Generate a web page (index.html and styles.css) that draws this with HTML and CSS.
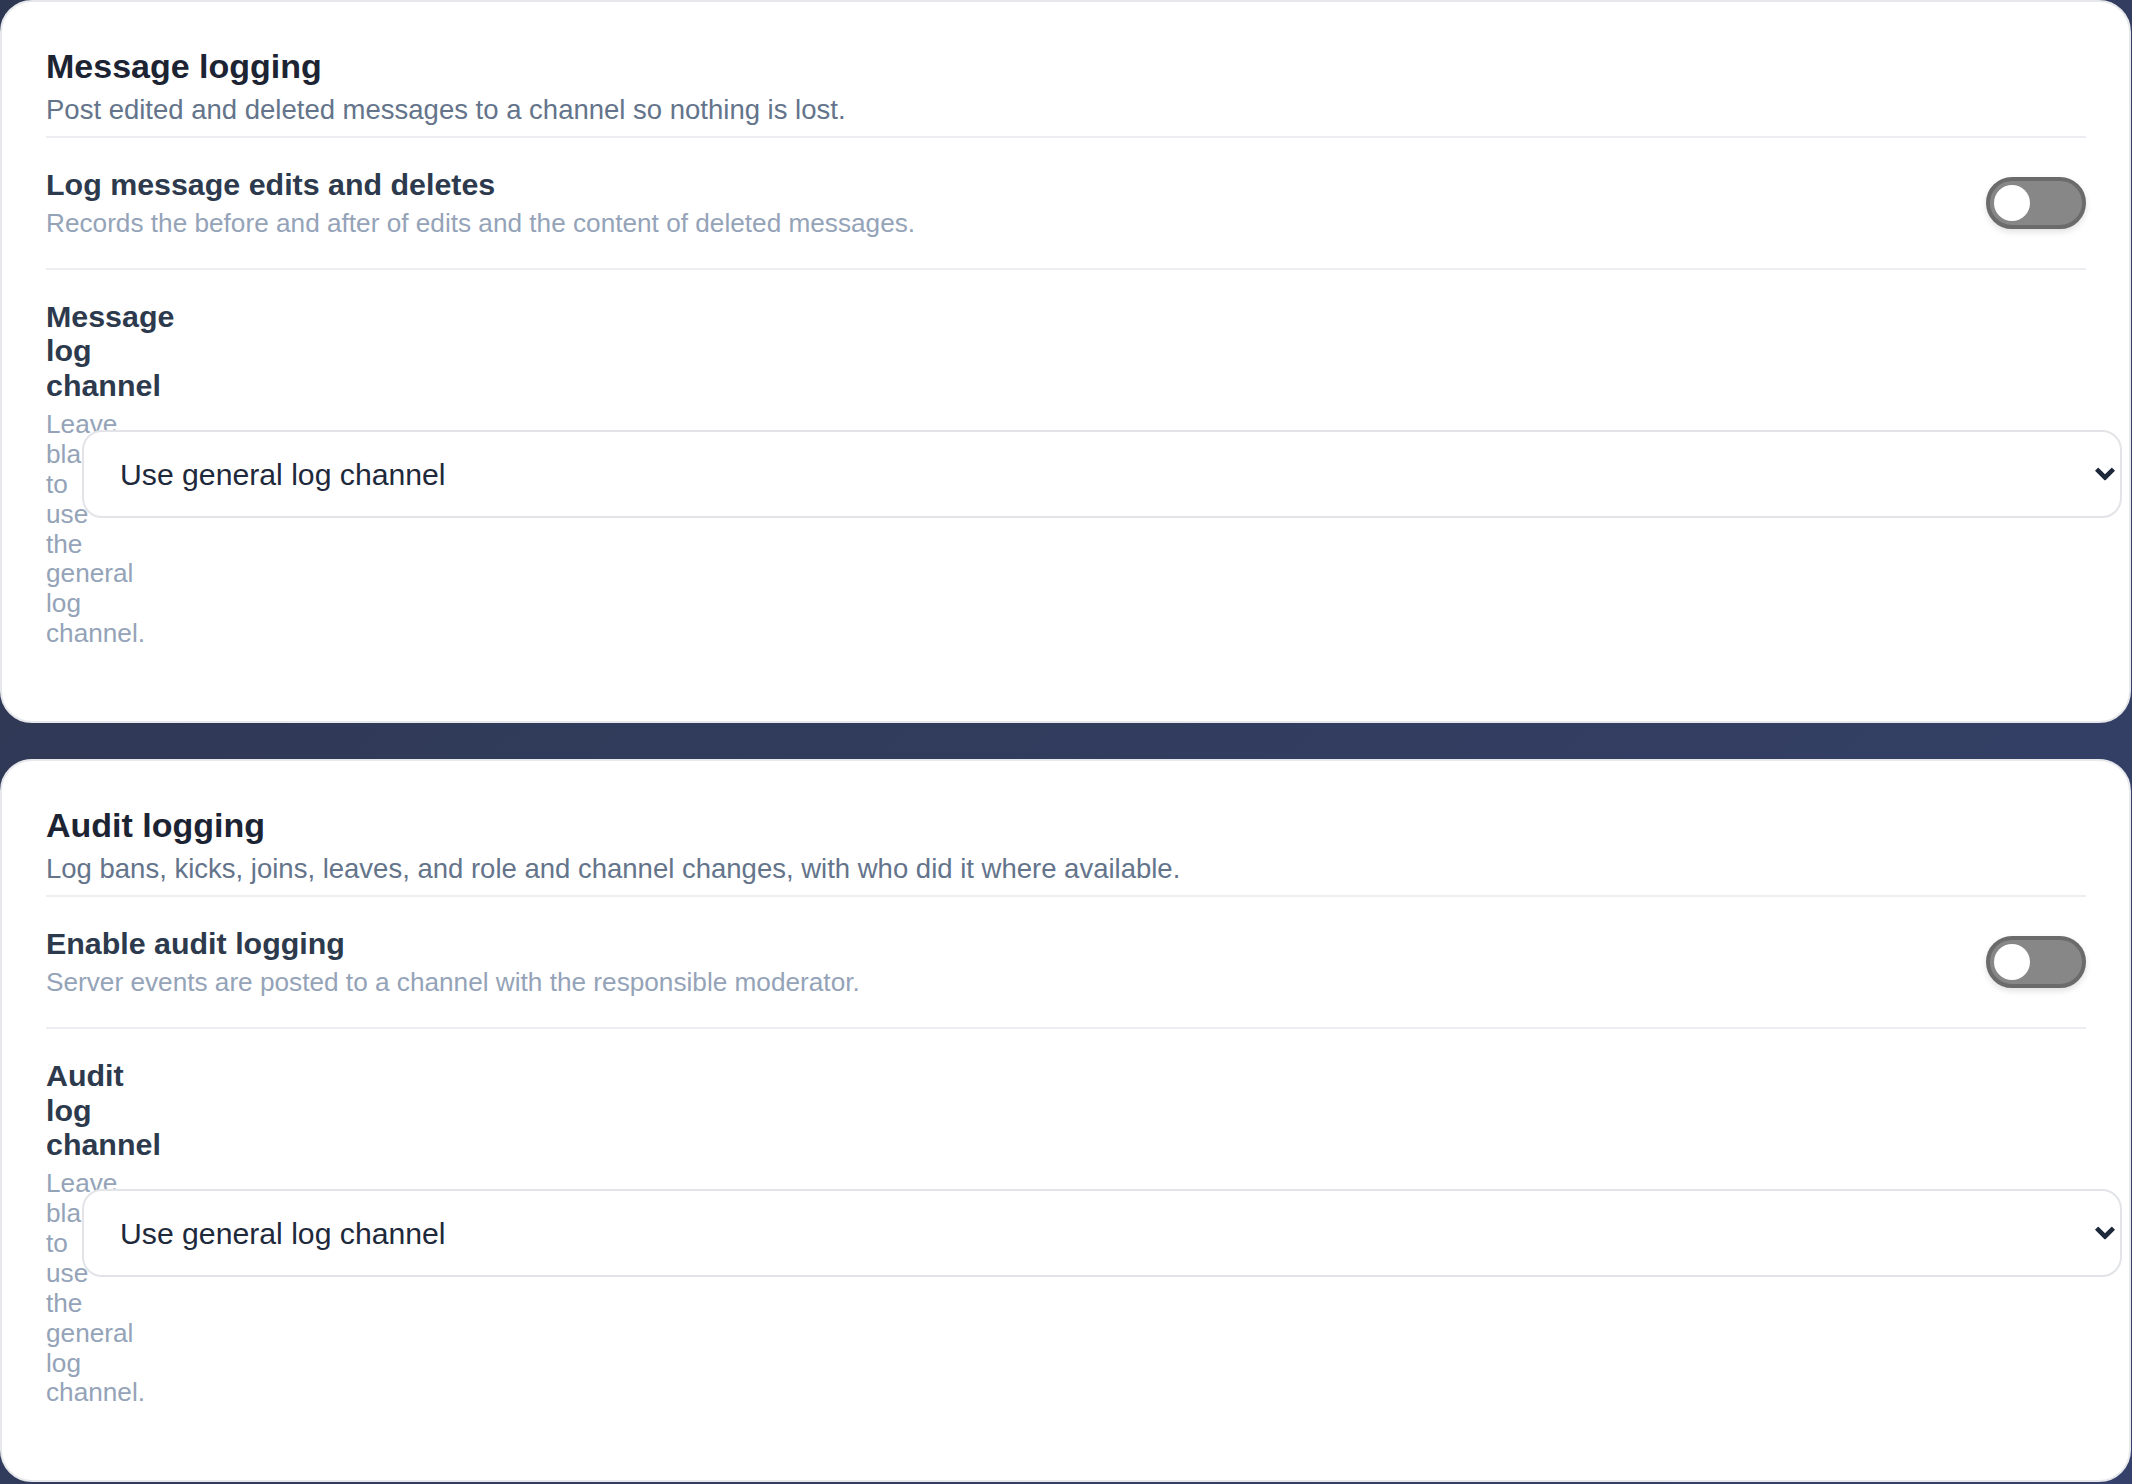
FILE: index.html
```html
<!DOCTYPE html>
<html lang="en">
<head>
    <meta charset="UTF-8">
    <meta name="viewport" content="width=device-width, initial-scale=1.0">
    <title>Logging Settings</title>
    <link rel="stylesheet" href="styles.css">
</head>
<body>
    <div class="settings">
        <section class="card">
            <div class="card-head">
                <h2>Message logging</h2>
                <p>Post edited and deleted messages to a channel so nothing is lost.</p>
            </div>

            <div class="setting-row">
                <div class="setting-text">
                    <h3>Log message edits and deletes</h3>
                    <p>Records the before and after of edits and the content of deleted messages.</p>
                </div>
                <label class="switch">
                    <input type="checkbox" id="logMessages">
                    <span class="slider"></span>
                </label>
            </div>

            <div class="setting-row">
                <div class="setting-text setting-text-squeezed">
                    <h3>Message log channel</h3>
                    <p>Leave blank to use the general log channel.</p>
                </div>
                <div class="select-wrap">
                    <select class="channel-select" id="messageLogChannel">
                        <option value="">Use general log channel</option>
                    </select>
                    <svg class="select-arrow" viewBox="0 0 20 13" width="20" height="13">
                        <polygon points="0,3.2 3.2,0 10,6.8 16.8,0 20,3.2 10,13.2"/>
                    </svg>
                </div>
            </div>
        </section>

        <section class="card">
            <div class="card-head">
                <h2>Audit logging</h2>
                <p>Log bans, kicks, joins, leaves, and role and channel changes, with who did it where available.</p>
            </div>

            <div class="setting-row">
                <div class="setting-text">
                    <h3>Enable audit logging</h3>
                    <p>Server events are posted to a channel with the responsible moderator.</p>
                </div>
                <label class="switch">
                    <input type="checkbox" id="auditLogging">
                    <span class="slider"></span>
                </label>
            </div>

            <div class="setting-row">
                <div class="setting-text setting-text-squeezed">
                    <h3>Audit log channel</h3>
                    <p>Leave blank to use the general log channel.</p>
                </div>
                <div class="select-wrap">
                    <select class="channel-select" id="auditLogChannel">
                        <option value="">Use general log channel</option>
                    </select>
                    <svg class="select-arrow" viewBox="0 0 20 13" width="20" height="13">
                        <polygon points="0,3.2 3.2,0 10,6.8 16.8,0 20,3.2 10,13.2"/>
                    </svg>
                </div>
            </div>
        </section>
    </div>
</body>
</html>
```

FILE: styles.css
```css
* {
    margin: 0;
    padding: 0;
    box-sizing: border-box;
}

body {
    font-family: 'Liberation Sans', Arial, Helvetica, sans-serif;
    background: linear-gradient(135deg, #2e3751 0%, #35416a 100%);
    min-height: 100vh;
}

.settings {
    display: flex;
    flex-direction: column;
    gap: 36px;
    padding-right: 1px;
}

.card {
    background: white;
    border: 2px solid #e6e8ec;
    border-radius: 32px;
    padding: 45px 43px 43px 44px;
}

.card-head {
    padding-bottom: 10px;
    border-bottom: 2px solid #eceef1;
}

.card-head h2 {
    font-size: 34px;
    font-weight: 700;
    color: #1c2433;
    line-height: 39px;
}

.card-head p {
    margin-top: 8px;
    font-size: 27.5px;
    color: #64748b;
    line-height: 32px;
}

.setting-row {
    display: flex;
    align-items: center;
    gap: 36px;
    padding: 29px 0;
}

.setting-row:not(:last-child) {
    border-bottom: 2px solid #eceef1;
}

.setting-text {
    flex: 1;
}

.setting-text h3 {
    font-size: 30.4px;
    font-weight: 700;
    color: #2d3a4d;
    line-height: 34.5px;
}

.setting-text p {
    margin-top: 7.5px;
    font-size: 26.2px;
    color: #94a3b8;
    line-height: 29.9px;
}

/* label column gives all its room to the select */
.setting-text-squeezed {
    min-width: 0;
    flex-basis: 0;
}

.select-wrap {
    position: relative;
    flex-shrink: 0;
    width: 100%;
}

.channel-select {
    display: block;
    width: 100%;
    height: 88px;
    padding: 0 60px 0 36px;
    font-family: inherit;
    font-size: 30.2px;
    color: #1e293b;
    background: white;
    border: 2px solid #e2e4e8;
    border-radius: 20px;
    appearance: none;
    -webkit-appearance: none;
    cursor: pointer;
}

.select-arrow {
    position: absolute;
    right: 7px;
    top: 50%;
    transform: translateY(-50%);
    fill: #1e293b;
    pointer-events: none;
}

.switch {
    position: relative;
    display: inline-block;
    flex-shrink: 0;
    width: 100px;
    height: 52px;
}

.switch input {
    opacity: 0;
    width: 0;
    height: 0;
}

.slider {
    position: absolute;
    inset: 0;
    background: #878787;
    border: 4px solid #6b6b6b;
    border-radius: 26px;
    box-shadow: 0 3px 6px rgba(0, 0, 0, 0.12);
    cursor: pointer;
    transition: all 0.3s ease;
}

.slider::before {
    content: "";
    position: absolute;
    top: 4px;
    left: 4px;
    width: 36px;
    height: 36px;
    background: white;
    border-radius: 50%;
    transition: all 0.3s ease;
}

.switch input:checked + .slider {
    background: #25D366;
    border-color: #1fb457;
}

.switch input:checked + .slider::before {
    transform: translateX(48px);
}
```
